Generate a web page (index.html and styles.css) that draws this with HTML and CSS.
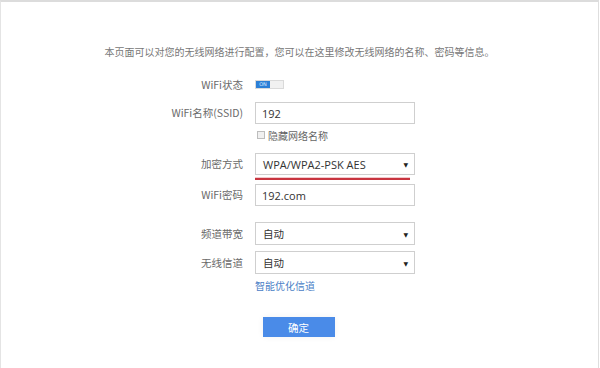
FILE: index.html
```html
<!DOCTYPE html>
<html lang="zh">
<head>
<meta charset="utf-8">
<title>无线设置</title>
<link rel="stylesheet" href="styles.css">
</head>
<body>
<div class="page">
  <p class="intro">本页面可以对您的无线网络进行配置，您可以在这里修改无线网络的名称、密码等信息。</p>
  <div class="form">
    <div class="row row-status">
      <span class="label">WiFi状态</span>
      <span class="toggle"><span class="toggle-on">ON</span><span class="toggle-off"></span></span>
    </div>
    <div class="row row-ssid">
      <span class="label">WiFi名称(SSID)</span>
      <span class="field">192</span>
    </div>
    <div class="row row-check">
      <span class="label"></span>
      <span class="check"><span class="box"></span>隐藏网络名称</span>
    </div>
    <div class="row row-enc">
      <span class="label">加密方式</span>
      <span class="field-wrap">
        <span class="field select">WPA/WPA2-PSK AES<span class="arrow">▼</span></span>
        <span class="mark"></span>
      </span>
    </div>
    <div class="row row-pwd">
      <span class="label">WiFi密码</span>
      <span class="field">192.com</span>
    </div>
    <div class="row row-band">
      <span class="label">频道带宽</span>
      <span class="field select tall">自动<span class="arrow">▼</span></span>
    </div>
    <div class="row row-chan">
      <span class="label">无线信道</span>
      <span class="field select tall">自动<span class="arrow">▼</span></span>
    </div>
    <div class="row row-link">
      <span class="label"></span>
      <a class="link" href="#">智能优化信道</a>
    </div>
  </div>
  <div class="actions">
    <button class="btn" type="button">确定</button>
  </div>
</div>
</body>
</html>
```
FILE: styles.css
```css
html, body {
  margin: 0;
  padding: 0;
  background: #fff;
}
.page {
  height: 368px;
  box-sizing: border-box;
  margin-right: 1px;
  border-top: 2px solid #dcdcdc;
  border-left: 1px solid #e4e4e4;
  border-right: 1px solid #dedede;
  font-family: "Noto Sans CJK SC", "Open Sans", sans-serif;
  color: #666;
  overflow: hidden;
}
.intro {
  margin: 43px 0 0;
  font-size: 10px;
  line-height: 14px;
  text-align: center;
  color: #777;
}
.form {
  display: flex;
  flex-direction: column;
  padding-left: 142px;
}
.row {
  display: flex;
  align-items: center;
  gap: 12px;
}
.label {
  width: 100px;
  flex: none;
  text-align: right;
  font-size: 10.5px;
  line-height: 14px;
  color: #6a6a6a;
}
.row-status { margin-top: 19px; height: 14px; }
.row-ssid { margin-top: 10px; }
.row-check { margin-top: 4px; height: 14px; }
.row-enc { margin-top: 11px; }
.row-pwd { margin-top: 9px; }
.row-band { margin-top: 16px; }
.row-chan { margin-top: 6px; }
.row-link { margin-top: 4px; height: 14px; }

.toggle {
  display: flex;
  width: 29px;
  height: 9px;
  border: 1px solid #dadada;
  box-sizing: border-box;
  margin-top: -2px;
}
.toggle-on {
  width: 14px;
  background: #2c7fd6;
  color: #dbeaff;
  font-family: "DejaVu Sans", sans-serif;
  font-size: 5px;
  line-height: 7px;
  text-align: center;
}
.toggle-off {
  flex: 1;
  background: #f1f1f1;
}
.field {
  display: flex;
  align-items: center;
  box-sizing: border-box;
  width: 160px;
  height: 22px;
  padding-left: 6px;
  border: 1px solid #cfcfcf;
  background: #fff;
  font-family: "Open Sans", "Noto Sans CJK SC", sans-serif;
  font-size: 11px;
  color: #333;
}
.field.tall { height: 23px; font-family: "Noto Sans CJK SC", sans-serif; font-size: 10.5px; }
.select { position: relative; padding-left: 7px; }
.arrow {
  position: absolute;
  right: 6px;
  top: 50%;
  transform: translateY(-50%);
  font-family: "DejaVu Sans", sans-serif;
  font-size: 6px;
  color: #222;
}
.field-wrap {
  position: relative;
  display: block;
}
.mark {
  position: absolute;
  left: 0;
  top: 25px;
  width: 155px;
  height: 2px;
  background: #c8343f;
  box-shadow: 0 -1px 0 #f2c9cd;
}
.check {
  display: flex;
  align-items: center;
  gap: 3px;
  font-size: 10px;
  color: #666;
  margin-left: 2px;
}
.box {
  width: 6px;
  height: 6px;
  border: 1px solid #bdbdbd;
  background: #f0f0f0;
}
.link {
  font-size: 10px;
  color: #4a80c6;
  text-decoration: none;
}
.actions {
  display: flex;
  justify-content: center;
  margin-top: 25px;
  padding-right: 2px;
}
.btn {
  width: 72px;
  height: 20px;
  border: none;
  border-radius: 0;
  background: #4a8be8;
  color: #fff;
  font-family: "Noto Sans CJK SC", sans-serif;
  font-size: 10.5px;
  padding: 0;
  box-shadow: 0 0 6px rgba(0,0,0,0.06);
}
```
